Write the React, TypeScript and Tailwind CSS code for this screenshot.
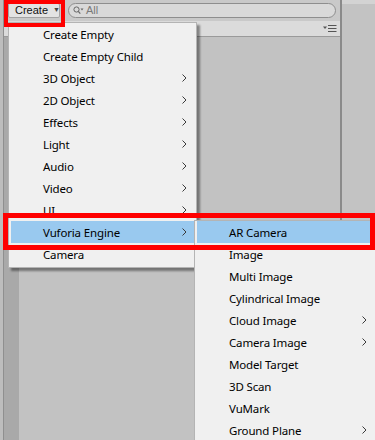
import { ReactNode } from "react";

type Item = { label: string; sub?: boolean; active?: boolean };

const createItems: Item[] = [
  { label: "Create Empty" },
  { label: "Create Empty Child" },
  { label: "3D Object", sub: true },
  { label: "2D Object", sub: true },
  { label: "Effects", sub: true },
  { label: "Light", sub: true },
  { label: "Audio", sub: true },
  { label: "Video", sub: true },
  { label: "UI", sub: true },
  { label: "Vuforia Engine", sub: true, active: true },
  { label: "Camera" },
];

const vuforiaItems: Item[] = [
  { label: "AR Camera", active: true },
  { label: "Image" },
  { label: "Multi Image" },
  { label: "Cylindrical Image" },
  { label: "Cloud Image", sub: true },
  { label: "Camera Image", sub: true },
  { label: "Model Target" },
  { label: "3D Scan" },
  { label: "VuMark" },
  { label: "Ground Plane", sub: true },
];

function Chevron() {
  return (
    <svg width="5" height="8" viewBox="0 0 5 8" className="shrink-0">
      <path d="M0.5 0.5 L4 4 L0.5 7.5" fill="none" stroke="#3a3a3a" strokeWidth="1" />
    </svg>
  );
}

function MenuRow({ item }: { item: Item }) {
  return (
    <div
      className={
        "mx-[2px] flex h-[22px] items-center pl-[32px] pr-[7px] " +
        (item.active ? "bg-[#99c9ef]" : "")
      }
    >
      <span className="flex-1 pt-[1px] text-[11.5px] leading-none tracking-[-0.15px] text-black">
        {item.label}
      </span>
      {item.sub && <Chevron />}
    </div>
  );
}

function Menu({ items, className }: { items: Item[]; className: string }): ReactNode {
  return (
    <div className={"absolute border border-[#b4b4b4] bg-[#f0f0f0] " + className}>
      {items.map((it) => (
        <MenuRow key={it.label} item={it} />
      ))}
    </div>
  );
}

export default function App() {
  return (
    <div className="relative h-[440px] w-[375px] overflow-hidden bg-[#c2c2c2] font-['Noto_Sans','DejaVu_Sans',sans-serif]">
      <div className="flex h-full">
        <div className="w-[4px] border-r border-[#8f8f8f] bg-[#bdbdbd]" />

        <div className="flex w-[336px] flex-col">
          <div className="flex h-[21px] items-center gap-[8px] bg-[#c9c9c9] pl-[4px] pr-[4px]">
            <div className="flex h-[15px] w-[52px] items-center gap-[5px] rounded-[2px] border border-[#a3a3a3] bg-[#e3e3e3] pl-[6px] font-['Liberation_Sans',Arial,sans-serif] text-[11px] text-[#111]">
              <span>Create</span>
              <span className="text-[7px] text-[#444]">▼</span>
            </div>
            <div className="flex h-[15px] flex-1 items-center gap-[2px] rounded-full border border-[#8e8e8e] bg-[#d9d9d9] pl-[4px] font-['Liberation_Sans',Arial,sans-serif] text-[11px] text-[#7a7a7a]">
              <svg width="11" height="9" viewBox="0 0 11 9">
                <circle cx="3.5" cy="3.5" r="2.6" fill="none" stroke="#666" strokeWidth="1" />
                <path d="M5.3 5.3 L7.3 7.6" stroke="#666" strokeWidth="1.2" />
                <path d="M7.5 2.5 L10.5 2.5 L9 4.5 Z" fill="#666" />
              </svg>
              <span>All</span>
            </div>
          </div>

          <div className="flex h-[16px] items-center justify-end gap-[1px] border-b border-[#9a9a9a] bg-[#dbdbdb] pr-[3px]">
            <svg width="14" height="7" viewBox="0 0 14 7">
              <path d="M0 1.5 L4 1.5 L2 4 Z" fill="#555" />
              <path d="M5 0.5 H13.5 M5 3.5 H13.5 M5 6.5 H13.5" stroke="#555" strokeWidth="1" />
            </svg>
          </div>

          <div className="flex flex-1">
            <div className="w-[15px] bg-[#a9a9a9]" />
            <div className="flex-1 bg-[#c2c2c2]" />
          </div>
        </div>

        <div className="w-[2px] bg-[#8a8a8a]" />

        <div className="flex flex-1 flex-col">
          <div className="h-[4px] bg-[#d3d3d3]" />
          <div className="flex-1 bg-[#c3c3c3]" />
        </div>
      </div>

      <Menu
        items={createItems}
        className="left-[8px] top-[22px] w-[189px] pb-[2px] shadow-[3px_3px_2px_rgba(0,0,0,0.4)]"
      />
      <Menu items={vuforiaItems} className="left-[194px] top-[220px] w-[183px] pb-[2px]" />

      <div className="absolute left-[4px] top-0 h-[27px] w-[61px] border-[4px] border-[#ff0000]" />
      <div className="absolute left-[3px] top-[213px] h-[37px] w-[372px] border-[5px] border-[#ff0000]" />
    </div>
  );
}
